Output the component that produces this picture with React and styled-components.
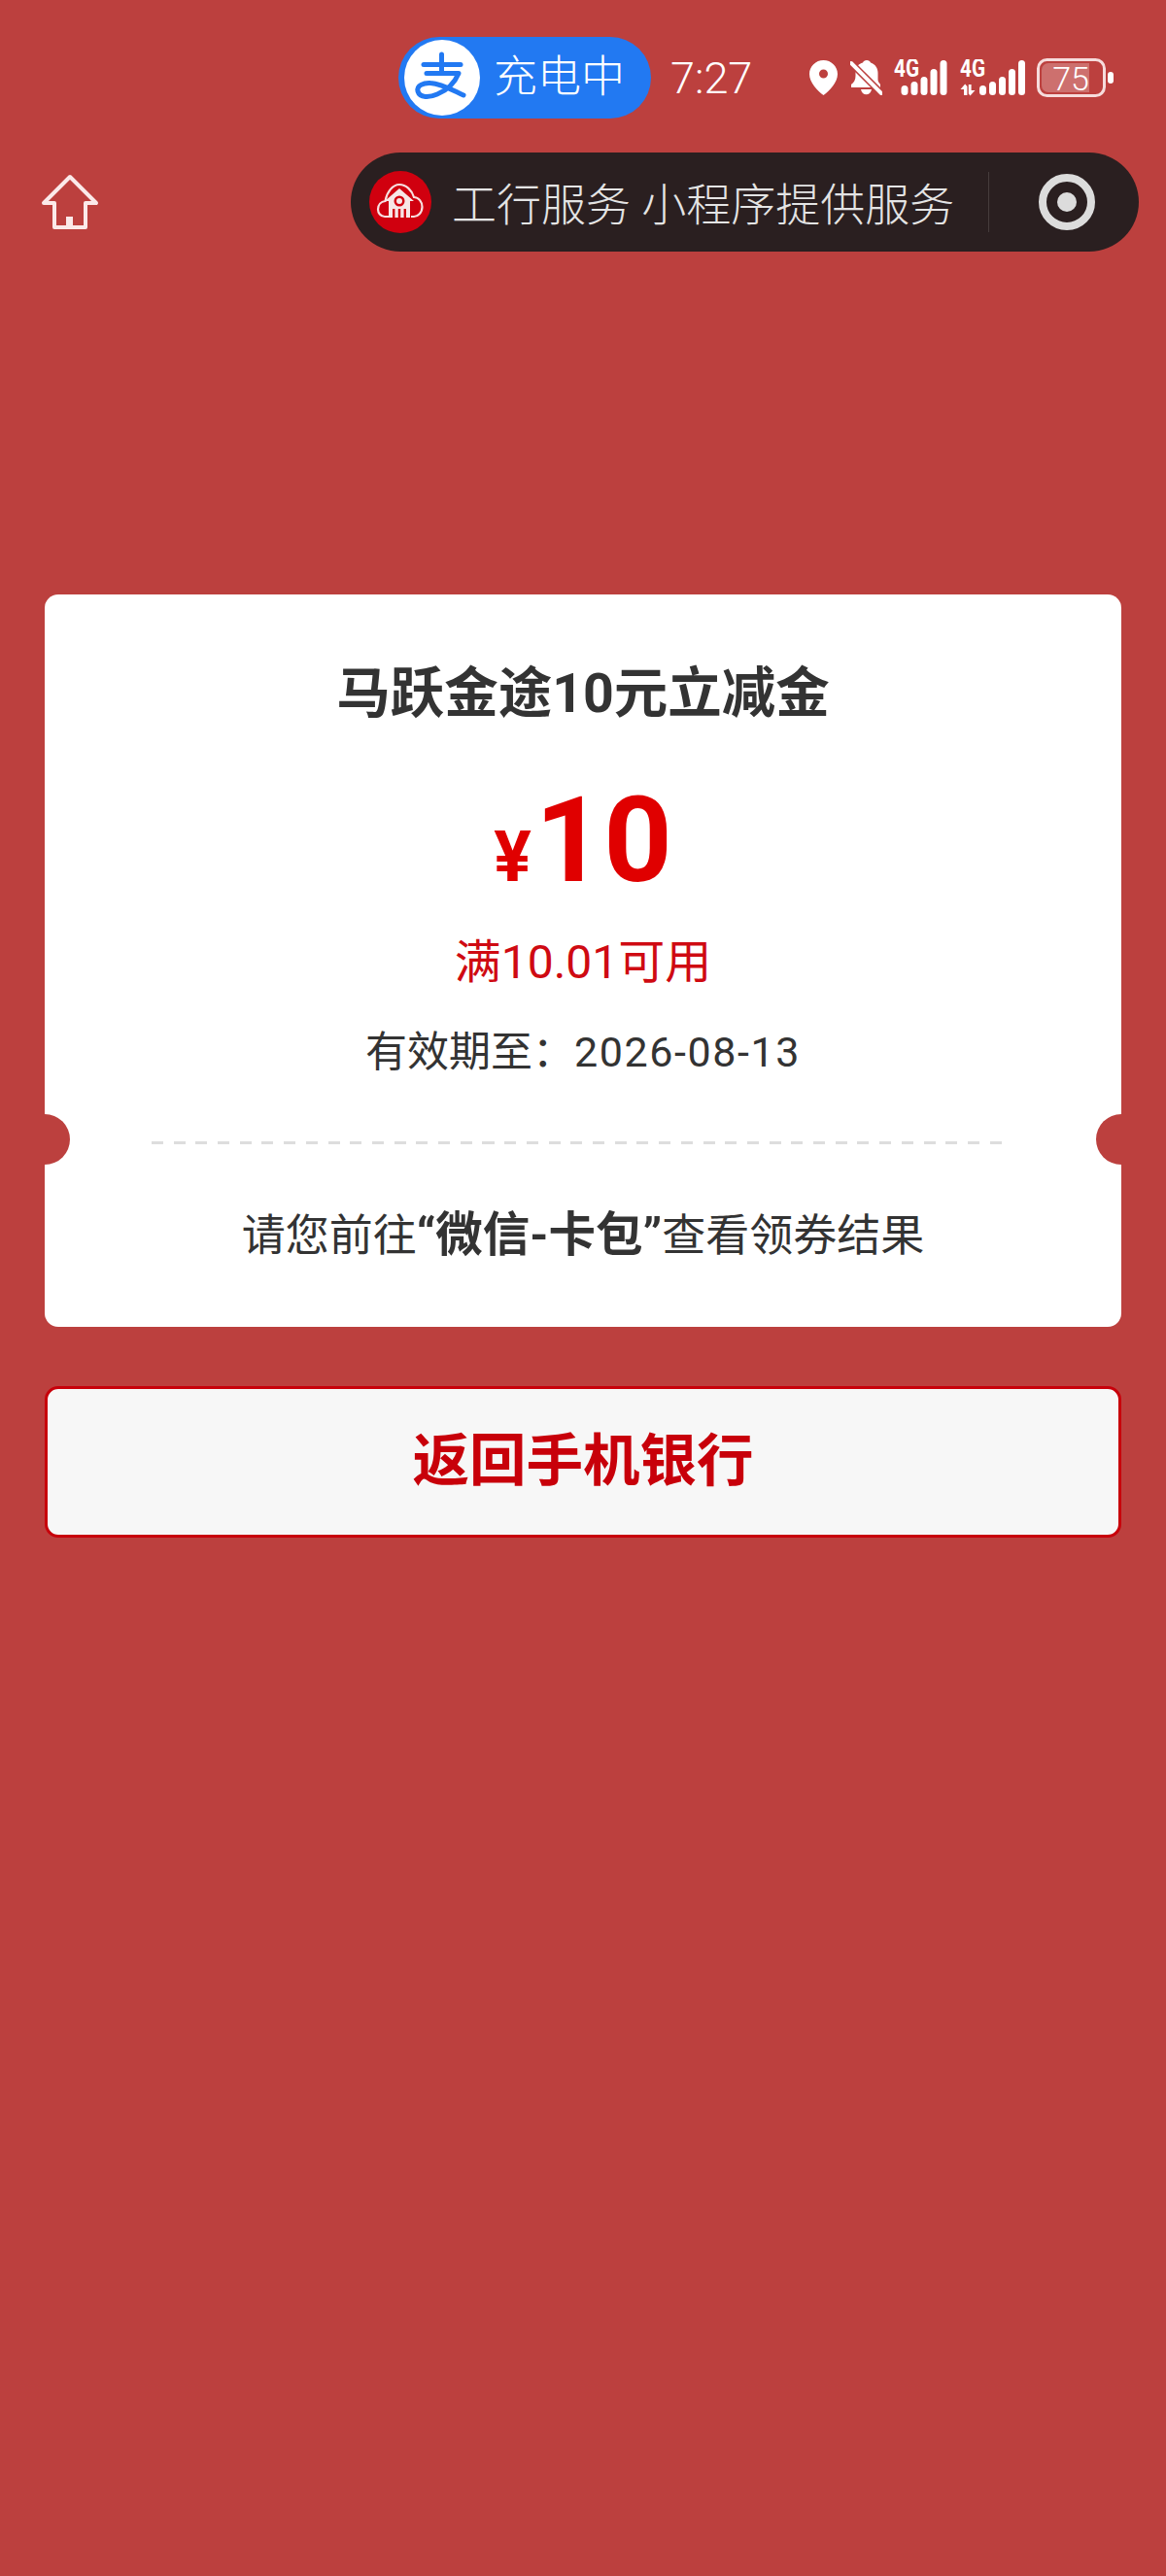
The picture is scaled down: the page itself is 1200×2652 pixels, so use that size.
import styled, { createGlobalStyle } from "styled-components";

const GlobalStyle = createGlobalStyle`
  html, body {
    margin: 0;
    padding: 0;
    background: #bc403e;
  }
  * {
    box-sizing: border-box;
  }
`;

const FONT = `Roboto, "Noto Sans CJK SC", sans-serif`;

const Page = styled.div`
  width: 1200px;
  min-height: 2652px;
  background: #bc403e;
  font-family: ${FONT};
`;

const StatusBar = styled.div`
  display: flex;
  align-items: center;
  justify-content: flex-end;
  height: 84px;
  margin-top: 38px;
  padding-right: 54px;
  color: #fff;
`;

const ChargePill = styled.div`
  display: flex;
  align-items: center;
  width: 260px;
  height: 84px;
  padding-left: 6px;
  border-radius: 42px;
  background: #2279f2;
  margin-right: 20px;
`;

const PillLogo = styled.svg`
  width: 78px;
  height: 78px;
  flex: none;
`;

const PillText = styled.span`
  margin-left: 14px;
  font-size: 45px;
  font-weight: 300;
  line-height: 1.3;
`;

const Clock = styled.span`
  font-size: 45px;
  font-weight: 300;
  width: 143px;
`;

const IconRow = styled.div`
  display: flex;
  align-items: center;
`;

const Icon = styled.svg`
  display: block;
  flex: none;
  margin-right: ${(p) => p.$gap || 0}px;
`;

const NavBar = styled.div`
  display: flex;
  align-items: center;
  justify-content: space-between;
  margin-top: 35px;
  padding: 0 28px 0 42px;
`;

const Capsule = styled.div`
  display: flex;
  align-items: center;
  width: 811px;
  height: 102px;
  padding-left: 19px;
  border-radius: 51px;
  background: #2a1f20;
`;

const BankLogo = styled.svg`
  width: 64px;
  height: 64px;
  flex: none;
`;

const CapsuleText = styled.span`
  margin-left: 21px;
  margin-top: -2px;
  width: 552px;
  flex: none;
  color: #e4e4e4;
  font-size: 46px;
  font-weight: 300;
  white-space: nowrap;
`;

const Divider = styled.div`
  width: 1px;
  height: 62px;
  background: #453c3c;
  flex: none;
`;

const TargetButton = styled.div`
  width: 58px;
  height: 58px;
  margin-left: 51px;
  flex: none;
  display: flex;
  align-items: center;
  justify-content: center;
  border: 8px solid #dcdcdc;
  border-radius: 50%;
`;

const TargetDot = styled.div`
  width: 20px;
  height: 20px;
  border-radius: 50%;
  background: #dcdcdc;
`;

const Content = styled.div`
  padding: 353px 46px 0;
`;

const Card = styled.div`
  position: relative;
  height: 754px;
  border-radius: 14px;
  background: #fff;
  overflow: hidden;
`;

const CardTop = styled.div`
  height: 563px;
  padding-top: 66px;
  display: flex;
  flex-direction: column;
  align-items: center;
`;

const Title = styled.div`
  font-size: 55.5px;
  font-weight: 700;
  line-height: 74px;
  color: #333;
`;

const Amount = styled.div`
  display: flex;
  align-items: baseline;
  margin-top: 51px;
  height: 124px;
  line-height: 124px;
  color: #e00000;
  font-weight: 700;
`;

const Currency = styled.span`
  font-size: 72px;
  margin-right: 4px;
`;

const AmountValue = styled.span`
  font-size: 123px;
`;

const Threshold = styled.div`
  margin-top: 33px;
  font-size: 48px;
  line-height: 62px;
  color: #cf0a12;
`;

const Expiry = styled.div`
  margin-top: 31px;
  font-size: 43px;
  line-height: 60px;
  color: #333;
`;

const ExpiryDate = styled.span`
  letter-spacing: 1.6px;
`;

const Dashes = styled.div`
  height: 3px;
  margin: 0 122px 0 110px;
  background: repeating-linear-gradient(
    to right,
    #dddddd 0,
    #dddddd 12px,
    transparent 12px,
    transparent 22.7px
  );
`;

const Notch = styled.div`
  position: absolute;
  top: 535px;
  ${(p) => (p.$side === "left" ? "left: -26px;" : "right: -26px;")}
  width: 52px;
  height: 52px;
  border-radius: 50%;
  background: #bc403e;
`;

const Hint = styled.div`
  margin-top: 62px;
  text-align: center;
  font-size: 45px;
  line-height: 64px;
  color: #333;

  b {
    font-size: 48.5px;
    font-weight: 700;
  }
`;

const BackButton = styled.button`
  display: block;
  width: 100%;
  height: 156px;
  margin-top: 61px;
  padding: 0 0 13px;
  border: 3px solid #c8000a;
  border-radius: 14px;
  background: #f7f7f7;
  color: #c8000a;
  font-family: ${FONT};
  font-size: 58.5px;
  font-weight: 700;
`;

const BAR_HEIGHTS = [10, 14, 19, 27, 36];

function Signal({ hasArrows }) {
  const width = hasArrows ? 67 : 55;
  const firstBar = hasArrows ? 20 : 7.5;
  return (
    <Icon width={width} height={38} viewBox={`0 0 ${width} 38`} $gap={hasArrows ? 12 : 13}>
      <text
        x="0"
        y="18"
        fontFamily="Roboto, sans-serif"
        fontWeight="700"
        fontSize="25"
        fill="#fff"
        textLength="26"
        lengthAdjust="spacingAndGlyphs"
      >
        4G
      </text>
      {hasArrows && (
        <g fill="#fff">
          <path d="M4 37V31H0.5L5.2 25.5L7.4 28V37Z" />
          <path d="M8.8 26H11.6V32H15.5L10.5 37.5L8.8 35.5Z" />
        </g>
      )}
      <g fill="#fff">
        {BAR_HEIGHTS.map((h, i) => (
          <rect key={i} x={firstBar + i * 10} y={37 - h} width="7" height={h} rx="3.5" />
        ))}
      </g>
    </Icon>
  );
}

function App() {
  return (
    <Page>
      <GlobalStyle />
      <StatusBar>
        <ChargePill>
          <PillLogo viewBox="0 0 78 78">
            <circle cx="39" cy="39" r="39" fill="#fff" />
            <g fill="none" stroke="#2279f2" strokeWidth="5" strokeLinecap="round" strokeLinejoin="round">
              <path d="M20 25.5H58" />
              <path d="M38.5 15V33" />
              <path d="M23 34.5H56C52 44 44 52 34 56C26 59.5 16 60 14 53C12.5 47 20 44 27 44.5C38 45 50 52 61 57" />
            </g>
          </PillLogo>
          <PillText>充电中</PillText>
        </ChargePill>
        <Clock>7:27</Clock>
        <IconRow>
          <Icon width={29} height={36} viewBox="0 0 29 36" $gap={13}>
            <path
              fillRule="evenodd"
              fill="#fff"
              d="M14.5 0C6.5 0 0 6.3 0 14.2C0 23 8.5 31.5 14.5 36C20.5 31.5 29 23 29 14.2C29 6.3 22.5 0 14.5 0ZM14.5 9.5a4.5 4.5 0 1 1 0 9a4.5 4.5 0 0 1 0-9Z"
            />
          </Icon>
          <Icon width={33} height={37} viewBox="0 0 33 37" $gap={12}>
            <path
              fill="#fff"
              d="M17 0C19 0 20.5 1 21 2.5C26 4 28.5 8.5 28.5 13V20C28.5 22 30 23.5 31 25V28H1V25C4 23 5.5 20 5.5 16V11C5.5 7 9 3.5 13 2.5C13.5 1 15 0 17 0ZM11 30H22C21 37 12 37 11 30Z"
            />
            <path d="M-2 0L34 36" stroke="#bc403e" strokeWidth="7" />
            <path d="M1 3L32 34" stroke="#fff" strokeWidth="4" strokeLinecap="round" />
          </Icon>
          <Signal />
          <Signal hasArrows />
          <Icon width={79} height={40} viewBox="0 0 79 40">
            <rect x="1.5" y="1.5" width="68" height="37" rx="9" fill="none" stroke="#f6dcdc" strokeWidth="3" />
            <path d="M5 12a7 7 0 0 1 7-7H54V35H12a7 7 0 0 1-7-7Z" fill="#fff" fillOpacity="0.25" />
            <rect x="73" y="14" width="6" height="12" rx="3" fill="#fff" />
            <text x="35" y="33" textAnchor="middle" fontFamily="Roboto, sans-serif" fontWeight="300" fontSize="34" fill="#fff">75</text>
          </Icon>
        </IconRow>
      </StatusBar>

      <NavBar>
        <Icon width={60} height={58} viewBox="0 0 60 58">
          <path
            d="M30 3L57 30H46V55H14V30H3Z"
            fill="none"
            stroke="#fbe9e9"
            strokeWidth="4"
            strokeLinejoin="round"
          />
          <rect x="26" y="44" width="7" height="11" fill="#fbe9e9" />
        </Icon>
        <Capsule>
          <BankLogo viewBox="4 4 64 64">
            <circle cx="36" cy="36" r="32" fill="#d0000f" />
            <path
              d="M25 51H20C15.5 51 13 47 13 43.5C13 39 16 35.5 20.5 35C22 26 28 18 35 18C42 18 48 24 50 31C55 31 58.5 36 58.5 41C58.5 47 54 51 50 51H47"
              fill="none"
              stroke="#f7dfe0"
              strokeWidth="2.2"
            />
            <path d="M35 22L50 35H46V52H24V35H20Z" fill="#f7e6e6" />
            <circle cx="35" cy="35" r="5.5" fill="#d0000f" />
            <circle cx="35" cy="35" r="3" fill="#f7e6e6" />
            <g fill="#d0000f">
              <rect x="28" y="43" width="2.4" height="9" />
              <rect x="33.8" y="43" width="2.4" height="9" />
              <rect x="39.6" y="43" width="2.4" height="9" />
            </g>
          </BankLogo>
          <CapsuleText>工行服务 小程序提供服务</CapsuleText>
          <Divider />
          <TargetButton>
            <TargetDot />
          </TargetButton>
        </Capsule>
      </NavBar>

      <Content>
        <Card>
          <CardTop>
            <Title>马跃金途10元立减金</Title>
            <Amount>
              <Currency>¥</Currency>
              <AmountValue>10</AmountValue>
            </Amount>
            <Threshold>满10.01可用</Threshold>
            <Expiry>
              有效期至：<ExpiryDate>2026-08-13</ExpiryDate>
            </Expiry>
          </CardTop>
          <Dashes />
          <Notch $side="left" />
          <Notch $side="right" />
          <Hint>
            请您前往<b>“微信-卡包”</b>查看领券结果
          </Hint>
        </Card>
        <BackButton>返回手机银行</BackButton>
      </Content>
    </Page>
  );
}

export default App;
